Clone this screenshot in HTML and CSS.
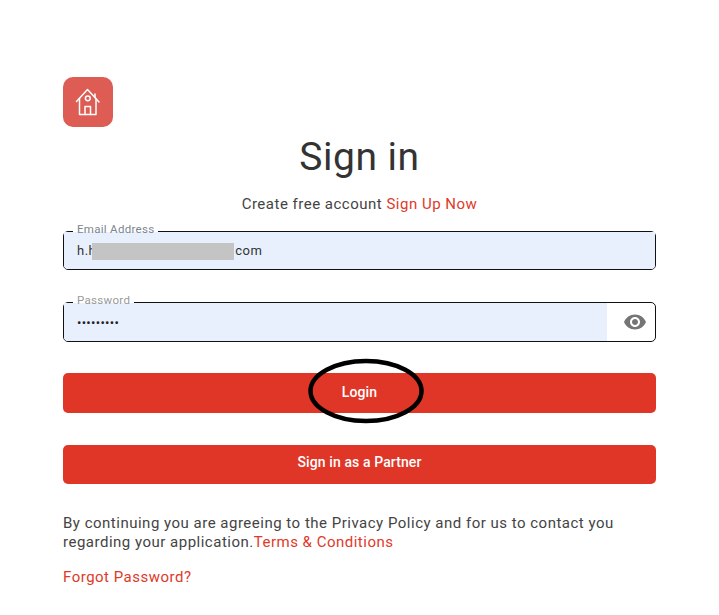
FILE: index.html
```html
<!DOCTYPE html>
<html lang="en">
<head>
<meta charset="utf-8">
<title>Sign in</title>
<link rel="stylesheet" href="styles.css">
</head>
<body>
<main class="page">
  <div class="logo">
    <svg width="28" height="28" viewBox="0 0 28 28" fill="none" stroke="#fff" stroke-width="1.5" stroke-linecap="round" stroke-linejoin="round">
      <path d="M2.500 13.500 13.500 1.500 25 14"/>
      <path d="M21 9.500V6"/>
      <path d="M5.500 10.500V26.500H22V10.500"/>
      <path d="M11 26.500V18.500H16.500V26.500"/>
      <circle cx="13.800" cy="10.300" r="2.400"/>
    </svg>
  </div>
  <h1 class="title">Sign in</h1>
  <p class="subtitle">Create free account <a class="link" href="#">Sign Up Now</a></p>
  <fieldset class="field field-email">
    <legend class="legend">Email Address</legend>
    <div class="value">h.h<span class="redact-mask"></span>com</div>
  </fieldset>
  <fieldset class="field field-pass">
    <legend class="legend legend-muted">Password</legend>
    <div class="pass-row">
      <div class="value value-pass">•••••••••</div>
      <div class="eye-box">
        <svg width="24" height="24" viewBox="0 0 24 24" fill="#757575"><path d="M12 4.500C7 4.500 2.730 7.610 1 12c1.730 4.390 6 7.500 11 7.500s9.270-3.110 11-7.500c-1.730-4.390-6-7.500-11-7.500zM12 17c-2.760 0-5-2.240-5-5s2.240-5 5-5 5 2.240 5 5-2.240 5-5 5zm0-8c-1.660 0-3 1.340-3 3s1.340 3 3 3 3-1.340 3-3-1.340-3-3-3z"/></svg>
      </div>
    </div>
  </fieldset>
  <button class="btn btn-login" type="button">Login</button>
  <button class="btn btn-partner" type="button">Sign in as a Partner</button>
  <p class="legal">By continuing you are agreeing to the Privacy Policy and for us to contact you regarding your application.<a class="link" href="#">Terms &amp; Conditions</a></p>
  <p class="forgot"><a class="link" href="#">Forgot Password?</a></p>
  <svg class="scribble" width="120" height="68" viewBox="0 0 120 68" fill="none"><ellipse cx="60" cy="34" rx="55.500" ry="30" stroke="#000" stroke-width="4.500"/></svg>
</main>
</body>
</html>
```

FILE: styles.css
```css
* { box-sizing: border-box; }
html, body { margin: 0; padding: 0; background: #fff; }
body { font-family: Roboto, "Liberation Sans", sans-serif; color: #333; }
.page {
  position: relative;
  width: 719px;
  height: 615px;
  padding: 77px 63px 0;
  display: flex;
  flex-direction: column;
  overflow: hidden;
}
.logo {
  width: 50px;
  height: 50px;
  border-radius: 10px;
  background: #dd5c54;
  display: flex;
  align-items: center;
  justify-content: center;
}
.title {
  margin: 6px 0 0;
  height: 49px;
  font-size: 39px;
  line-height: 49px;
  font-weight: 400;
  text-align: center;
  color: #333;
  letter-spacing: 0.5px;
}
.subtitle {
  margin: 12px 0 0;
  height: 20px;
  font-size: 15px;
  line-height: 20px;
  text-align: center;
  letter-spacing: 0.5px;
  color: #444;
}
.link { color: #e0392a; text-decoration: none; }
.field {
  margin: 0;
  padding: 0;
  border: 1px solid #111;
  border-radius: 5px;
  min-width: 0;
}
.field-email { margin-top: 10px; height: 46px; }
.field-pass { margin-top: 25px; height: 47px; }
.legend {
  position: relative;
  z-index: 1;
  margin-left: 9px;
  padding: 0 4px 4px;
  font-size: 11.500px;
  line-height: 10px;
  letter-spacing: 0.3px;
  color: #7d8590;
}
.legend-muted { color: #999; }
.value {
  height: 37px;
  margin-top: -6px;
  padding: 1px 0 0 13px;
  background: #e8f0fe;
  border-radius: 0 0 4px 4px;
  font-size: 13px;
  line-height: 36px;
  letter-spacing: 0.5px;
  color: #333;
  display: flex;
  align-items: center;
}
.redact-mask {
  display: inline-block;
  width: 142px;
  height: 17px;
  margin-left: -4px;
  margin-right: 1px;
  background: #c4c4c4;
}
.pass-row { display: flex; margin-top: -6px; height: 38px; }
.value-pass {
  flex: 1;
  height: 38px;
  margin-top: 0;
  line-height: 37px;
  font-size: 13px;
  letter-spacing: 0.3px;
  border-radius: 0 0 0 4px;
  color: #222;
}
.eye-box {
  width: 48px;
  display: flex;
  align-items: center;
  justify-content: center;
  padding-left: 7px;
}
.btn {
  display: block;
  width: 100%;
  border: 0;
  border-radius: 5px;
  background: #e03628;
  color: #fff;
  font-family: inherit;
  font-size: 14px;
  font-weight: 500;
  letter-spacing: 0.1px;
  text-align: center;
}
.btn-login { margin-top: 31px; height: 40px; padding: 0 0 3px; }
.btn-partner { margin-top: 32px; height: 39px; padding: 0 0 5px; }
.legal {
  margin: 30px 0 0;
  font-size: 15px;
  line-height: 19px;
  letter-spacing: 0.5px;
  color: #444;
}
.forgot {
  margin: 16px 0 0;
  font-size: 15px;
  line-height: 19px;
  letter-spacing: 0.5px;
}
.scribble { position: absolute; left: 306px; top: 357px; }
```
